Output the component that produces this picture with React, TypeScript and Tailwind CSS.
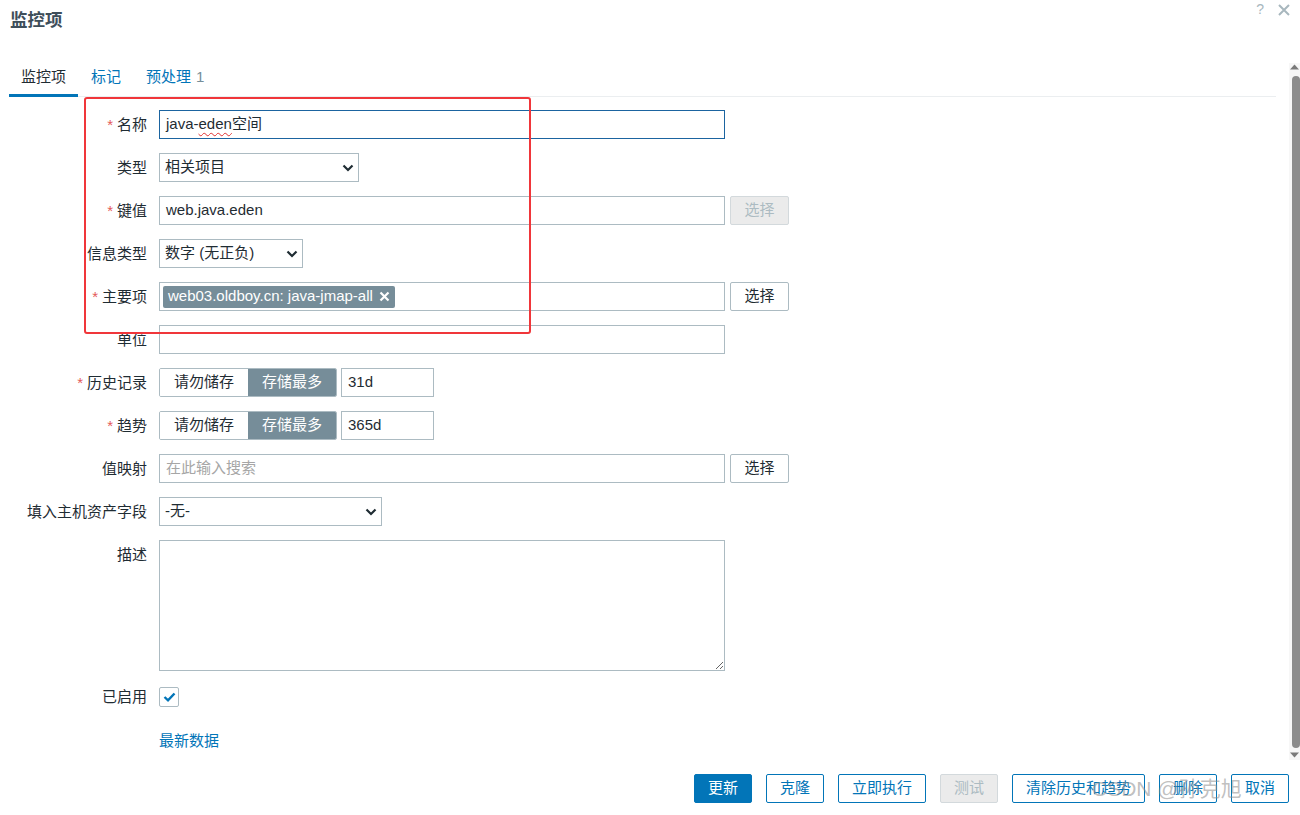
import React from "react";

const FONT = "font-['Liberation_Sans','Noto_Sans_CJK_SC',sans-serif]";

function Label({ text, req }: { text: string; req?: boolean }) {
  return (
    <div className="w-[138px] shrink-0 text-right pr-0 text-[15px] text-[#1f2c33] leading-[29px] whitespace-nowrap">
      {req && <span className="text-[#e45959] mr-[4px]">*</span>}
      {text}
    </div>
  );
}

function Row({ label, req, children, top }: { label: string; req?: boolean; children?: React.ReactNode; top?: boolean }) {
  return (
    <div className={`flex ${top ? "items-start" : "items-center"}`}>
      <Label text={label} req={req} />
      <div className="ml-[12px] flex items-center">{children}</div>
    </div>
  );
}

function Chevron() {
  return (
    <svg width="12" height="8" viewBox="0 0 12 8" className="shrink-0">
      <path d="M1.5 1.5 L6 6 L10.5 1.5" fill="none" stroke="#1f2c33" strokeWidth="2.2" />
    </svg>
  );
}

function Select({ w, text }: { w: string; text: string }) {
  return (
    <div className={`${w} h-[29px] border border-[#acbbc2] bg-white flex items-center justify-between pl-[5px] pr-[4px] text-[15px] text-[#1f2c33]`}>
      <span>{text}</span>
      <Chevron />
    </div>
  );
}

function Input({ w, children, cls }: { w: string; children?: React.ReactNode; cls?: string }) {
  return (
    <div className={`${w} h-[29px] border ${cls ?? "border-[#acbbc2]"} bg-white flex items-center pl-[6px] text-[15px] text-[#1f2c33] whitespace-nowrap overflow-hidden`}>
      {children}
    </div>
  );
}

function SelBtn({ disabled }: { disabled?: boolean }) {
  return (
    <div
      className={`ml-[5px] w-[59px] h-[29px] rounded-[2px] border flex items-center justify-center text-[15px] ${
        disabled ? "bg-[#ebebeb] border-[#d3d9dc] text-[#acbbc2]" : "bg-white border-[#acbbc2] text-[#1f2c33]"
      }`}
    >
      选择
    </div>
  );
}

function Segment({ value }: { value: string }) {
  return (
    <>
      <div className="flex h-[29px] w-[178px] rounded-[2px] overflow-hidden border border-[#acbbc2] text-[15px]">
        <div className="flex-1 flex items-center justify-center bg-white text-[#1f2c33]">请勿储存</div>
        <div className="flex-1 flex items-center justify-center bg-[#768d99] text-white">存储最多</div>
      </div>
      <div className="ml-[4px] w-[93px] h-[29px] border border-[#acbbc2] flex items-center pl-[6px] text-[15px] text-[#1f2c33]">{value}</div>
    </>
  );
}

function FBtn({ text, kind }: { text: string; kind?: "primary" | "disabled" }) {
  const c =
    kind === "primary"
      ? "bg-[#0275b8] border-[#0275b8] text-white"
      : kind === "disabled"
      ? "bg-[#ebebeb] border-[#d3d9dc] text-[#acbbc2]"
      : "bg-white border-[#0275b8] text-[#0275b8]";
  return <div className={`h-[29px] px-[13px] rounded-[2px] border flex items-center text-[15px] whitespace-nowrap ${c}`}>{text}</div>;
}

export default function App() {
  return (
    <div className={`relative w-[1300px] h-[815px] bg-white overflow-hidden ${FONT} flex flex-col`}>
      {/* header */}
      <div className="h-[63px] shrink-0 flex justify-between">
        <div className="pl-[10px] pt-[9px] text-[17.5px] font-bold text-[#3e4e5a] leading-[22px]">监控项</div>
        <div className="flex items-start pt-[1px] pr-[9px] gap-[13px] text-[#a8b7be]">
          <span className="text-[14px] leading-[16px]">?</span>
          <svg width="14" height="14" viewBox="0 0 14 14" className="mt-[2px]">
            <path d="M2 2 L12 12 M12 2 L2 12" stroke="#a8b7be" strokeWidth="2" />
          </svg>
        </div>
      </div>

      {/* middle */}
      <div className="h-[697px] shrink-0 flex">
        <div className="flex-1 pl-[9px] pr-[13px]">
          <div className="h-[34px] border-b border-[#ebeef0] flex items-stretch text-[15px]">
            <div className="px-[12px] flex items-center text-[#1f2c33] border-b-[3px] border-[#0275b8] -mb-[1px] pb-[2px]">监控项</div>
            <div className="ml-[1px] px-[12px] flex items-center text-[#0275b8] pb-[5px]">标记</div>
            <div className="ml-[1px] px-[12px] flex items-center text-[#0275b8] pb-[5px]">
              预处理<span className="ml-[5px] text-[#768d99]">1</span>
            </div>
          </div>

          <div className="pt-[13px] flex flex-col gap-[14px]">
            <Row label="名称" req>
              <Input w="w-[566px]" cls="border-[#1b64a0]">
                java-<span className="underline decoration-wavy decoration-[#e03030] decoration-[1px] underline-offset-[3px]">eden</span>空间
              </Input>
            </Row>
            <Row label="类型">
              <Select w="w-[200px]" text="相关项目" />
            </Row>
            <Row label="键值" req>
              <Input w="w-[566px]">web.java.eden</Input>
              <SelBtn disabled />
            </Row>
            <Row label="信息类型">
              <Select w="w-[144px]" text="数字 (无正负)" />
            </Row>
            <Row label="主要项" req>
              <div className="w-[566px] h-[29px] border border-[#acbbc2] bg-white flex items-center pl-[3px]">
                <div className="h-[22px] rounded-[2px] bg-[#768d99] text-white text-[15px] flex items-center pl-[5px] pr-[5px] whitespace-nowrap">
                  web03.oldboy.cn: java-jmap-all
                  <svg width="11" height="11" viewBox="0 0 11 11" className="ml-[6px]">
                    <path d="M1.5 1.5 L9.5 9.5 M9.5 1.5 L1.5 9.5" stroke="white" strokeWidth="2.2" />
                  </svg>
                </div>
              </div>
              <SelBtn />
            </Row>
            <Row label="单位">
              <Input w="w-[566px]" />
            </Row>
            <Row label="历史记录" req>
              <Segment value="31d" />
            </Row>
            <Row label="趋势" req>
              <Segment value="365d" />
            </Row>
            <Row label="值映射">
              <Input w="w-[566px]">
                <span className="text-[#a6a6a6]">在此输入搜索</span>
              </Input>
              <SelBtn />
            </Row>
            <Row label="填入主机资产字段">
              <Select w="w-[223px]" text="-无-" />
            </Row>
            <Row label="描述" top>
              <textarea
                readOnly
                className="block w-[566px] h-[131px] border border-[#acbbc2] bg-white outline-none"
              />
            </Row>
            <div className="flex items-center -mt-[3px]">
              <Label text="已启用" />
              <div className="ml-[12px] w-[20px] h-[20px] border border-[#acbbc2] rounded-[2px] flex items-center justify-center">
                <svg width="13" height="10" viewBox="0 0 13 10">
                  <path d="M1.5 5 L5 8.3 L11.5 1.5" fill="none" stroke="#0275b8" strokeWidth="2.4" />
                </svg>
              </div>
            </div>
            <div className="flex items-center mt-[1px]">
              <div className="w-[138px]" />
              <div className="ml-[12px] text-[15px] text-[#0275b8] leading-[29px]">最新数据</div>
            </div>
          </div>
        </div>

        {/* scrollbar */}
        <div className="w-[11px] shrink-0 bg-[#f7f7f7] flex flex-col items-center">
          <svg width="9" height="6" viewBox="0 0 9 6" className="mt-[1px]">
            <path d="M0 5.5 L4.5 0.5 L9 5.5 Z" fill="#7a7a7a" />
          </svg>
          <div className="mt-[6px] w-[8px] ml-[2px] h-[672px] rounded-[4px] bg-[#8c8c8c]" />
          <div className="flex-1" />
          <svg width="9" height="6" viewBox="0 0 9 6" className="mb-[2px]">
            <path d="M0 0.5 L4.5 5.5 L9 0.5 Z" fill="#7a7a7a" />
          </svg>
        </div>
      </div>

      {/* footer */}
      <div className="flex-1 flex justify-end items-start pt-[14px] pr-[11px] gap-[14px]">
        <FBtn text="更新" kind="primary" />
        <FBtn text="克隆" />
        <FBtn text="立即执行" />
        <FBtn text="测试" kind="disabled" />
        <FBtn text="清除历史和趋势" />
        <FBtn text="删除" />
        <FBtn text="取消" />
      </div>

      {/* annotation overlay */}
      <div className="absolute left-[84px] top-[97px] w-[447px] h-[237px] border-2 border-[#f0363a] rounded-[3px] pointer-events-none" />
      {/* watermark */}
      <div className="absolute left-[1092px] top-[776px] text-[21px] leading-[26px] text-[rgba(140,140,140,0.55)] pointer-events-none whitespace-nowrap">
        CSDN @孙克旭
      </div>
    </div>
  );
}
